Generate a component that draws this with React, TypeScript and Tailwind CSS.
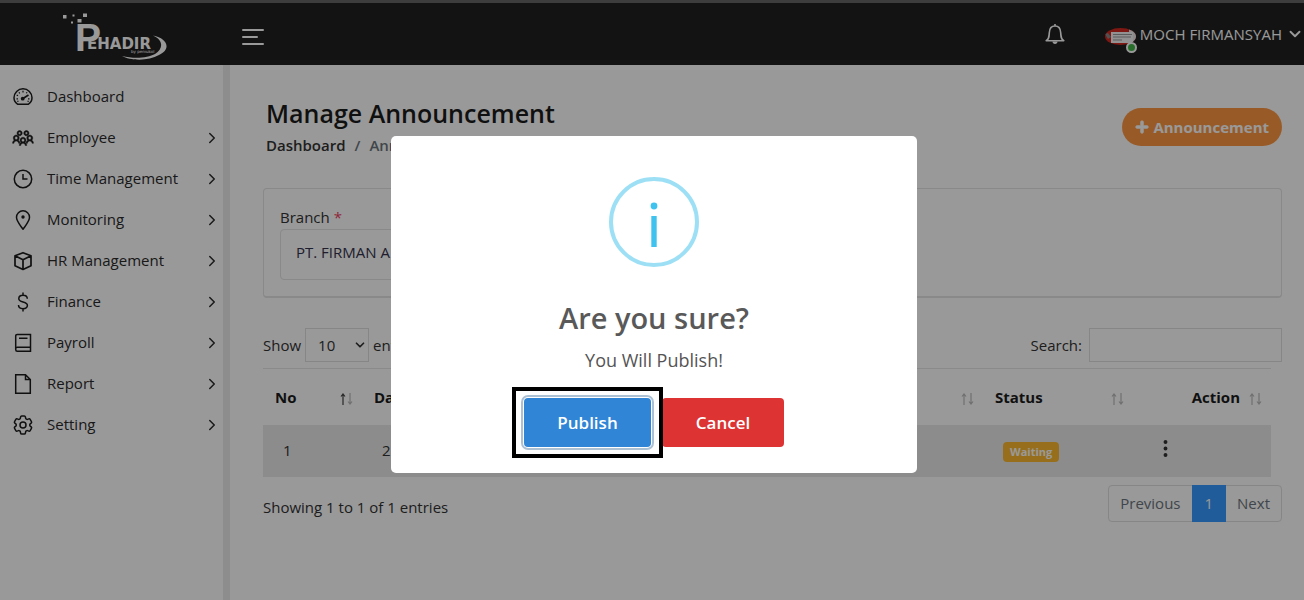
import React from "react";
import type { ReactNode } from "react";
import { FiChevronRight, FiChevronDown } from "react-icons/fi";
import { BsThreeDotsVertical } from "react-icons/bs";
import { HiOutlineCog6Tooth } from "react-icons/hi2";
import { LiaUsersSolid } from "react-icons/lia";
import { FaPlus } from "react-icons/fa";

type NavItem = { label: string; icon: ReactNode; expandable: boolean };

function LineIcon({ children }: { children: ReactNode }) {
  return (
    <svg viewBox="0 0 20 20" className="size-5" fill="none" stroke="currentColor" strokeWidth="1.500" aria-hidden="true">
      {children}
    </svg>
  );
}

const gauge = (
  <LineIcon>
    <path d="M4.500 17.200C2.400 15.700 1 13.500 1 10.800a9 9 0 0 1 18 0c0 2.700-1.400 4.900-3.500 6.400z" strokeLinejoin="round" />
    <path d="M10 3.800v1.600M6 5.200l.7 1.300M14 5.200l-.6 1.100M3.700 8l1.300.8M3.500 11.800H5M15 11.800h1.500M4.300 14.600l1.200-.7M15.700 14.600l-1.200-.7" strokeWidth="1.200" />
    <path d="M10 11.500L15.500 8" strokeWidth="1.600" />
    <circle cx="9.700" cy="11.700" r="1.900" fill="currentColor" stroke="none" />
  </LineIcon>
);

const clock = (
  <LineIcon>
    <circle cx="10" cy="10" r="8.700" />
    <path d="M10 5v5h4.500" />
  </LineIcon>
);

const pin = (
  <LineIcon>
    <path d="M10 19.200C7 15 3.500 11.200 3.500 7.300a6.500 6.500 0 0 1 13 0c0 3.900-3.500 7.700-6.500 11.900z" strokeLinejoin="round" />
    <circle cx="10" cy="7" r="1.700" fill="currentColor" stroke="none" />
  </LineIcon>
);

const cube = (
  <LineIcon>
    <path d="M10 1.700l8 3.100v9.900l-8 3.800-8-3.800V4.800zM2 4.800l8 4 8-4M10 8.800v9.700" strokeWidth="1.700" strokeLinejoin="round" />
  </LineIcon>
);

const dollar = (
  <LineIcon>
    <path d="M10 .5v3M10 16.500v3M14.300 6.800c0-2.200-1.800-3.500-4.300-3.500S5.800 4.700 5.800 6.700c0 4.300 8.600 2.200 8.600 6.600 0 2.100-1.900 3.400-4.400 3.400s-4.500-1.300-4.500-3.600" />
  </LineIcon>
);

const book = (
  <LineIcon>
    <path d="M17.500 14.200V1.500H4.200C3.300 1.500 2.700 2 2.700 3v13.500c0 1.200.6 1.800 1.600 1.800h13.200v-4.100H4.300c-1 0-1.600.5-1.600 1.500M6 5.300h8.500" />
  </LineIcon>
);

const page = (
  <LineIcon>
    <path d="M12.500.800H2.700v18.400h14.600V5.500zM12.500.800v4.700h4.800" />
  </LineIcon>
);

const navItems: NavItem[] = [
  { label: "Dashboard", icon: gauge, expandable: false },
  { label: "Employee", icon: <LiaUsersSolid size={24} strokeWidth={0.6} />, expandable: true },
  { label: "Time Management", icon: clock, expandable: true },
  { label: "Monitoring", icon: pin, expandable: true },
  { label: "HR Management", icon: cube, expandable: true },
  { label: "Finance", icon: dollar, expandable: true },
  { label: "Payroll", icon: book, expandable: true },
  { label: "Report", icon: page, expandable: true },
  { label: "Setting", icon: <HiOutlineCog6Tooth size={24} />, expandable: true },
];

function Logo() {
  return (
    <svg viewBox="0 0 106 48" className="h-12 w-[106px]" role="img" aria-label="Pehadir">
      <g fill="#fff">
        <rect x="1" y="3" width="3.500" height="3.500" />
        <rect x="10.500" y="2.500" width="2" height="2" />
        <rect x="21" y="1.500" width="4" height="3.500" />
        <rect x="9" y="9.500" width="2" height="2" />
        <rect x="15.500" y="7" width="4" height="3.500" />
        <path d="M91 23.500 C105 26 110 37 97 43 C86 49.500 68 48.500 60 44 C72 47 86 46 93 42 C102 36 101 28 91 23.500 Z" />
      </g>
      <g fill="#fff" fontFamily="'DejaVu Sans', sans-serif" fontWeight="700">
        <text x="13" y="39" fontSize="39" fontFamily="'Liberation Sans', Arial, sans-serif">
          P
          <tspan x="25" y="37" fontSize="15" fontFamily="'DejaVu Sans', sans-serif">EHADIR</tspan>
        </text>
        <text x="69" y="41" fontSize="4" fontWeight="400">by pemukol</text>
      </g>
    </svg>
  );
}

function Header() {
  return (
    <header className="flex h-[65px] items-center border-t-[3px] border-[#666] bg-[#212121] text-white">
      <div className="flex w-[230px] shrink-0 justify-center pt-1">
        <Logo />
      </div>
      <button type="button" aria-label="Toggle menu" className="ml-3 flex w-6 flex-col gap-[5px] pt-[6px]">
        <span className="h-[2px] w-[22px] rounded bg-white" />
        <span className="h-[2px] w-4 rounded bg-white" />
        <span className="h-[2px] w-[22px] rounded bg-white" />
      </button>
      <div className="ml-auto flex items-center">
        <button type="button" aria-label="Notifications" className="mr-10">
          <svg viewBox="0 0 20 22" className="h-[22px] w-5" fill="none" stroke="#fff" strokeWidth="1.600" strokeLinejoin="round">
            <path d="M10 1v2M1.200 17.700c2.700-1.600 2.900-3.600 3.100-8C4.500 5.300 6.600 3 10 3s5.500 2.300 5.700 6.700c.2 4.400.4 6.400 3.100 8z" />
            <path d="M7.500 18.500h5c0 1.600-1 2.500-2.500 2.500s-2.500-.9-2.500-2.500z" fill="#fff" stroke="none" />
          </svg>
        </button>
        <button type="button" className="flex items-center text-[15px]">
          <span className="relative mr-1">
            <svg viewBox="0 0 31 17" className="mt-1 h-[17px] w-[31px]" aria-hidden="true">
              <clipPath id="avatar">
                <ellipse cx="15.500" cy="8.500" rx="15.500" ry="8.500" />
              </clipPath>
              <g clipPath="url(#avatar)">
                <rect width="31" height="17" fill="#d4281f" />
                <path d="M24 0h7v17h-7z" fill="#e6e6e6" />
                <path d="M0 6l3-1 3 4-3 2z" fill="#888" />
                <rect x="6" y="4" width="22" height="11" fill="#f4f4f4" />
                <path d="M8 6.500h19M8 9h18M8 12h9" stroke="#999" strokeWidth="1" />
              </g>
            </svg>
            <span className="absolute -right-px -bottom-2 size-[11px] rounded-full border-2 border-white bg-[#44b849]" />
          </span>
          MOCH FIRMANSYAH
          <FiChevronDown size={18} strokeWidth={2.5} className="ml-1" />
        </button>
      </div>
    </header>
  );
}

function Sidebar() {
  return (
    <nav className="w-[230px] shrink-0 border-r-[7px] border-[#ebebeb] pt-[11px]">
      <ul>
        {navItems.map((item) => (
          <li key={item.label}>
            <a href="#" className="flex h-[41px] items-center pr-[2px] text-[15px] text-[#2b2b2b]">
              <span className="flex w-[47px] justify-center pr-px text-[#1c1c1c]">{item.icon}</span>
              <span className="grow">{item.label}</span>
              {item.expandable && <FiChevronRight size={18} />}
            </a>
          </li>
        ))}
      </ul>
    </nav>
  );
}

function SortMark({ active = false }: { active?: boolean }) {
  return (
    <svg viewBox="0 0 14 12" className="mt-1 h-3 w-[14px] shrink-0" fill="none" aria-hidden="true">
      <path d="M4 12V1M2 3.500L4 1l2 2.500" stroke={active ? "#444" : "#bbb"} strokeWidth="1.200" />
      <path d="M11 0v11M9 8.500l2 2.500 2-2.500" stroke="#bbb" strokeWidth="1.200" />
    </svg>
  );
}

function HeadCell({ label, width, active, end }: { label: string; width: string; active?: boolean; end?: boolean }) {
  return (
    <th className={`${width} h-14 pr-[9px] pl-3 text-left font-bold`}>
      <span className={`flex items-center ${end ? "justify-end gap-2" : "justify-between"}`}>
        {label}
        <SortMark active={active} />
      </span>
    </th>
  );
}

function Announcements() {
  return (
    <main className="min-w-0 grow pt-8 pr-[22px] pl-[33px]">
      <div className="flex items-start justify-between">
        <div className="pl-[3px]">
          <h1 className="text-[25px] leading-8 font-semibold text-[#1c1c1c]">Manage Announcement</h1>
          <p className="mt-1 flex gap-[9px] text-[15px] leading-6 font-semibold text-[#6c757d]">
            <a href="#" className="text-[#333]">Dashboard</a>
            <span>/</span>
            <span>Announcement</span>
          </p>
        </div>
        <button
          type="button"
          className="mt-[11px] flex h-[38px] items-center gap-1 rounded-full bg-[#fe9844] px-[13px] text-[15px] font-bold text-white"
        >
          <FaPlus size={14} stroke="currentColor" strokeWidth={30} />
          Announcement
        </button>
      </div>

      <section className="mt-[31px] rounded border border-b-2 border-[#e4e4e4] px-4 pt-4 pb-4">
        <label htmlFor="branch" className="block text-[15px] leading-6 text-[#333]">
          Branch <span className="text-[#f0415f]">*</span>
        </label>
        <select
          id="branch"
          className="h-[51px] w-1/3 appearance-none rounded border border-[#e4e4e4] px-[15px] pb-1 text-[15px] text-[#33334d]"
        >
          <option>PT. FIRMAN A</option>
        </select>
      </section>

      <div className="mt-[30px] flex items-center justify-between text-[15px] text-[#333]">
        <label className="flex items-center gap-1">
          Show
          <span className="relative">
            <select className="h-[34px] w-16 appearance-none border border-[#dfdfdf] px-3">
              <option>10</option>
            </select>
            <FiChevronDown size={14} strokeWidth={3} className="pointer-events-none absolute top-[10px] right-[2px]" />
          </span>
          entries
        </label>
        <label className="flex items-center gap-[7px]">
          Search:
          <input type="search" className="h-[34px] w-[193px] border border-[#dfdfdf] px-3" />
        </label>
      </div>

      <div className="mt-[6px] pr-[11px]">
        <table className="w-full table-fixed border-t border-[#e6e6e6] text-[15px] text-[#1c1c1c]">
          <thead>
            <tr>
              <HeadCell label="No" width="w-[99px]" active />
              <HeadCell label="Date" width="w-[200px]" />
              <HeadCell label="Title" width="w-auto" />
              <HeadCell label="Status" width="w-[150px]" />
              <HeadCell label="Action" width="w-[138px]" end />
            </tr>
          </thead>
          <tbody>
            <tr className="h-[52px] bg-[#eaeaea] text-[#333]">
              <td className="px-5">1</td>
              <td className="px-5">2</td>
              <td className="px-5" />
              <td className="px-5">
                <span className="inline-block rounded bg-[#fcb930] px-[7px] text-[11px] leading-5 font-bold text-white">
                  Waiting
                </span>
              </td>
              <td className="px-5">
                <button type="button" aria-label="Row actions" className="block pb-1 pl-[2px]">
                  <BsThreeDotsVertical size={21} />
                </button>
              </td>
            </tr>
          </tbody>
        </table>
      </div>

      <div className="mt-2 flex items-start justify-between text-[15px] text-[#333]">
        <p className="pt-[11px]">Showing 1 to 1 of 1 entries</p>
        <div className="flex h-[37px] rounded border border-[#dfdfdf] text-[#6c757d]">
          <button type="button" className="px-[11px]">Previous</button>
          <button type="button" className="-my-px bg-[#3699ff] px-[13px] text-white">1</button>
          <button type="button" className="px-[11px]">Next</button>
        </div>
      </div>
    </main>
  );
}

function ConfirmDialog() {
  return (
    <div className="fixed inset-0 flex items-start justify-center bg-black/40 pt-[136px] pl-1">
      <div
        role="dialog"
        aria-modal="true"
        aria-labelledby="confirm-title"
        className="flex w-[526px] flex-col items-center rounded-[5px] bg-white pt-[41px] pb-[26px]"
      >
        <svg viewBox="0 0 90 90" className="size-[90px]" aria-hidden="true">
          <circle cx="45" cy="45" r="43" fill="none" stroke="#9de0f6" strokeWidth="4" />
          <circle cx="45" cy="29" r="3.400" fill="#3fc3ee" />
          <rect x="42.300" y="39" width="5.400" height="31" fill="#3fc3ee" />
        </svg>
        <h2 id="confirm-title" className="mt-[31px] text-[29px] leading-10 font-semibold text-[#595959]">
          Are you sure?
        </h2>
        <p className="mt-2 text-[18px] leading-7 text-[#545454]">You Will Publish!</p>
        <div className="mt-6 flex gap-[11px] text-[17px] font-semibold text-white">
          <button
            type="button"
            className="relative h-[49px] w-[127px] rounded bg-[#3085d6] shadow-[0_0_0_1px_#fff,0_0_0_3px_rgba(50,100,150,0.4)]"
          >
            Publish
            <span className="pointer-events-none absolute -inset-x-3 -inset-y-[11px] border-4 border-black" />
          </button>
          <button type="button" className="h-[49px] w-[122px] rounded bg-[#dd3333]">
            Cancel
          </button>
        </div>
      </div>
    </div>
  );
}

export default function App() {
  return (
    <div className="flex min-h-screen flex-col bg-white font-['Open_Sans','Noto_Sans',sans-serif]">
      <Header />
      <div className="flex grow">
        <Sidebar />
        <Announcements />
      </div>
      <ConfirmDialog />
    </div>
  );
}
